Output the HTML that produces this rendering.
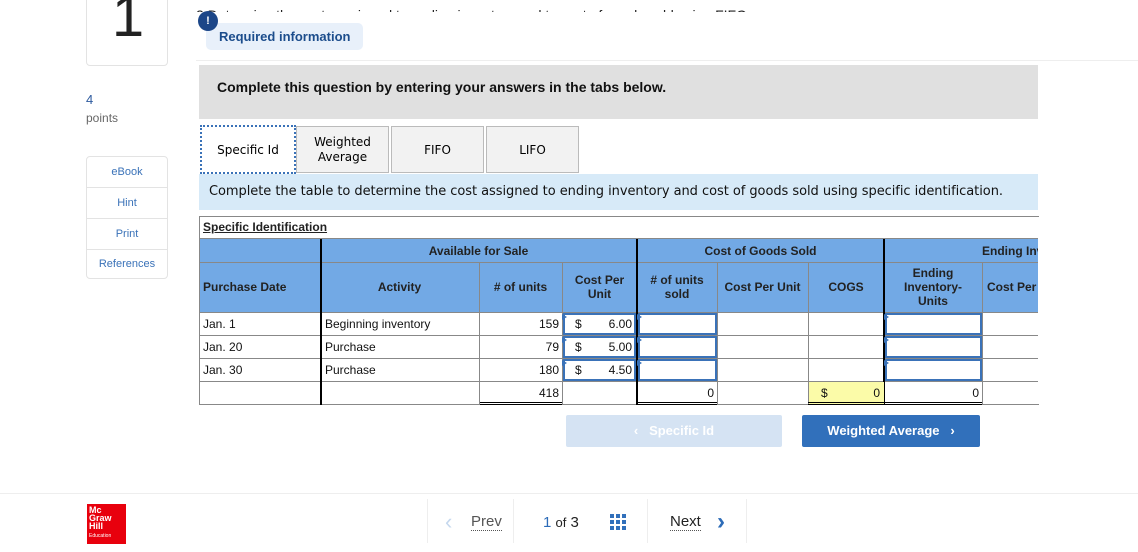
<!DOCTYPE html>
<html><head><meta charset="utf-8"><style>
body{margin:0;width:1138px;height:552px;overflow:hidden;background:#fff;font-family:"Liberation Sans",Arial,sans-serif;position:relative}
.a{position:absolute;box-sizing:border-box}
.h{background:#72a9e5;font-weight:bold;font-size:12px;color:#222;display:flex;align-items:center;justify-content:center;text-align:center;line-height:14px}
.c{font-size:12px;color:#111;display:flex;align-items:center;padding:0 3px}
.r{justify-content:flex-end}
.in{border:2px solid #3a72b8;background:#fff}
.tri{position:absolute;width:0;height:0;border-top:3px solid transparent;border-bottom:3px solid transparent;border-left:5px solid #3a72b8}
.vl{position:absolute;background:#888;width:1px}
.vk{position:absolute;background:#000;width:2px}
.hl{position:absolute;background:#888;height:1px}
.side{font-size:11px;color:#3a72b8;text-align:center;height:30px;line-height:30px;border-bottom:1px solid #e3e3e3}
</style></head><body>
<div class="a" style="left:86px;top:-10px;width:82px;height:76px;border:1px solid #e3e3e3;border-radius:4px;overflow:hidden"><div style="position:absolute;left:0;width:82px;top:-6px;font-size:58px;text-align:center;line-height:64px;color:#222;font-family:'Liberation Sans',sans-serif">1</div></div>
<div class="a" style="left:86px;top:92px;font-size:13px;color:#2d5a9e">4</div>
<div class="a" style="left:86px;top:111px;font-size:12px;color:#666">points</div>
<div class="a" style="left:86px;top:156px;width:82px;border:1px solid #e3e3e3;border-radius:4px">
<div class="side">eBook</div><div class="side">Hint</div><div class="side">Print</div><div class="side" style="border:0;height:28px;line-height:28px">References</div></div>
<div class="a" style="left:196px;top:8px;font-size:14px;color:#222;height:4px;overflow:hidden;line-height:14px;white-space:nowrap"><div style="margin-top:0">2 Determine the costs assigned to ending inventory and to cost of goods sold using FIFO</div></div>
<div class="a" style="left:206px;top:23px;width:157px;height:27px;background:#e8f0fa;border-radius:5px;color:#1c4d8c;font-weight:bold;font-size:13px;line-height:27px;padding-left:13px">Required information</div>
<div class="a" style="left:198px;top:11px;width:20px;height:20px;border-radius:50%;background:#1c4688;color:#fff;font-size:11px;font-weight:bold;text-align:center;line-height:20px">!</div>
<div class="a" style="left:196px;top:60px;width:942px;height:1px;background:#eee"></div>
<div class="a" style="left:199px;top:65px;width:839px;height:54px;background:#e0e0e0;font-weight:bold;font-size:14px;padding:14px 0 0 18px;color:#111">Complete this question by entering your answers in the tabs below.</div>
<div class="a" style="left:200px;top:125px;width:96px;height:49px;border:2px dotted #3a72b8;background:#fff;font-size:12px;display:flex;align-items:center;justify-content:center;font-family:'DejaVu Sans',sans-serif">Specific Id</div>
<div class="a" style="left:296px;top:126px;width:93px;height:47px;border:1px solid #bbb;background:#f2f2f2;font-size:12px;display:flex;align-items:center;justify-content:center;text-align:center;line-height:15px;font-family:'DejaVu Sans',sans-serif">Weighted<br>Average</div>
<div class="a" style="left:391px;top:126px;width:93px;height:47px;border:1px solid #bbb;background:#f2f2f2;font-size:12px;display:flex;align-items:center;justify-content:center;font-family:'DejaVu Sans',sans-serif">FIFO</div>
<div class="a" style="left:486px;top:126px;width:93px;height:47px;border:1px solid #bbb;background:#f2f2f2;font-size:12px;display:flex;align-items:center;justify-content:center;font-family:'DejaVu Sans',sans-serif">LIFO</div>
<div class="a" style="left:199px;top:174px;width:839px;height:36px;background:#d7eaf8;font-size:13px;padding:10px 0 0 10px;color:#111;font-family:'DejaVu Sans',sans-serif;letter-spacing:-0.05px;white-space:nowrap">Complete the table to determine the cost assigned to ending inventory and cost of goods sold using specific identification.</div>
<div class="a" style="left:199px;top:216px;width:840px;height:189px;border-top:1px solid #888;border-left:1px solid #888;border-bottom:1px solid #888"></div>
<div class="a" style="left:203px;top:220px;font-size:12px;font-weight:bold;text-decoration:underline;color:#222">Specific Identification</div>
<div class="a h" style="left:200px;top:239px;width:838px;height:73px"></div>
<div class="a h" style="left:320px;top:239px;width:317px;height:23px">Available for Sale</div>
<div class="a h" style="left:637px;top:239px;width:247px;height:23px">Cost of Goods Sold</div>
<div class="a h" style="left:884px;top:239px;width:154px;height:23px;justify-content:flex-start;overflow:hidden;white-space:nowrap"><span style="margin-left:98px">Ending Inventory</span></div>
<div class="a h" style="left:200px;top:262px;width:120px;height:50px;justify-content:flex-start;padding-left:3px">Purchase Date</div>
<div class="a h" style="left:320px;top:262px;width:159px;height:50px">Activity</div>
<div class="a h" style="left:479px;top:262px;width:83px;height:50px"># of units</div>
<div class="a h" style="left:562px;top:262px;width:75px;height:50px">Cost Per<br>Unit</div>
<div class="a h" style="left:637px;top:262px;width:80px;height:50px"># of units<br>sold</div>
<div class="a h" style="left:717px;top:262px;width:91px;height:50px">Cost Per Unit</div>
<div class="a h" style="left:808px;top:262px;width:76px;height:50px">COGS</div>
<div class="a h" style="left:884px;top:262px;width:98px;height:50px">Ending<br>Inventory-<br>Units</div>
<div class="a h" style="left:982px;top:262px;width:56px;height:50px;justify-content:flex-start;padding-left:5px;white-space:nowrap;overflow:hidden">Cost Per Unit</div>
<div class="hl" style="left:200px;top:238px;width:838px"></div>
<div class="hl" style="left:200px;top:262px;width:838px"></div>
<div class="hl" style="left:200px;top:312px;width:838px"></div>
<div class="hl" style="left:200px;top:335px;width:838px"></div>
<div class="hl" style="left:200px;top:358px;width:838px"></div>
<div class="hl" style="left:200px;top:381px;width:838px"></div>
<div class="vl" style="left:479px;top:262px;height:142px"></div>
<div class="vl" style="left:562px;top:262px;height:142px"></div>
<div class="vl" style="left:717px;top:262px;height:142px"></div>
<div class="vl" style="left:808px;top:262px;height:142px"></div>
<div class="vl" style="left:982px;top:262px;height:142px"></div>
<div class="vk" style="left:320px;top:239px;height:166px"></div>
<div class="vk" style="left:636px;top:239px;height:166px"></div>
<div class="vk" style="left:883px;top:239px;height:166px"></div>
<div class="a c" style="left:200px;top:312px;height:23px">Jan. 1</div>
<div class="a c" style="left:200px;top:335px;height:23px">Jan. 20</div>
<div class="a c" style="left:200px;top:358px;height:23px">Jan. 30</div>
<div class="a c" style="left:322px;top:312px;height:23px">Beginning inventory</div>
<div class="a c" style="left:322px;top:335px;height:23px">Purchase</div>
<div class="a c" style="left:322px;top:358px;height:23px">Purchase</div>
<div class="a c r" style="left:480px;top:312px;width:82px;height:23px">159</div>
<div class="a c r" style="left:480px;top:335px;width:82px;height:23px">79</div>
<div class="a c r" style="left:480px;top:358px;width:82px;height:23px">180</div>
<div class="a c r" style="left:480px;top:381px;width:82px;height:23px">418</div>
<div class="a in c" style="left:563px;top:313px;width:73px;height:22px;justify-content:space-between;padding:0 2px 0 10px"><span>$</span><span>6.00</span></div>
<div class="a in c" style="left:563px;top:336px;width:73px;height:22px;justify-content:space-between;padding:0 2px 0 10px"><span>$</span><span>5.00</span></div>
<div class="a in c" style="left:563px;top:359px;width:73px;height:22px;justify-content:space-between;padding:0 2px 0 10px"><span>$</span><span>4.50</span></div>
<div class="a in" style="left:638px;top:313px;width:79px;height:22px"></div>
<div class="a in" style="left:638px;top:336px;width:79px;height:22px"></div>
<div class="a in" style="left:638px;top:359px;width:79px;height:22px"></div>
<div class="a in" style="left:885px;top:313px;width:97px;height:22px"></div>
<div class="a in" style="left:885px;top:336px;width:97px;height:22px"></div>
<div class="a in" style="left:885px;top:359px;width:97px;height:22px"></div>
<div class="tri" style="left:562px;top:314px"></div><div class="tri" style="left:562px;top:337px"></div><div class="tri" style="left:562px;top:360px"></div>
<div class="tri" style="left:637px;top:314px"></div><div class="tri" style="left:637px;top:337px"></div><div class="tri" style="left:637px;top:360px"></div>
<div class="tri" style="left:884px;top:314px"></div><div class="tri" style="left:884px;top:337px"></div><div class="tri" style="left:884px;top:360px"></div>
<div class="a c r" style="left:637px;top:381px;width:80px;height:23px">0</div>
<div class="a c" style="left:809px;top:382px;width:75px;height:22px;background:#fbfba8;justify-content:space-between;padding:0 4px 0 12px"><span>$</span><span>0</span></div>
<div class="a c r" style="left:884px;top:381px;width:98px;height:23px">0</div>
<div class="a" style="left:480px;top:402px;width:82px;height:3px;border-top:1px solid #000;border-bottom:1px solid #000"></div>
<div class="a" style="left:637px;top:402px;width:80px;height:3px;border-top:1px solid #000;border-bottom:1px solid #000"></div>
<div class="a" style="left:808px;top:402px;width:76px;height:3px;border-top:1px solid #000;border-bottom:1px solid #000"></div>
<div class="a" style="left:884px;top:402px;width:98px;height:3px;border-top:1px solid #000;border-bottom:1px solid #000"></div>
<div class="a" style="left:566px;top:415px;width:216px;height:32px;background:#d5e3f3;border-radius:2px;color:#fff;font-weight:bold;font-size:13px;text-align:center;line-height:32px">&lsaquo;&nbsp;&nbsp;&nbsp;Specific Id</div>
<div class="a" style="left:802px;top:415px;width:178px;height:32px;background:#3170bb;border-radius:2px;color:#fff;font-weight:bold;font-size:13px;text-align:center;line-height:32px">Weighted Average&nbsp;&nbsp;&nbsp;&rsaquo;</div>
<div class="a" style="left:0;top:493px;width:1138px;height:1px;background:#eee"></div>
<div class="a" style="left:87px;top:504px;width:39px;height:40px;background:#e8000d;color:#fff;font-weight:bold;font-size:9px;line-height:8px;padding:2px 0 0 2px">Mc<br>Graw<br>Hill<br><span style="font-size:5px;font-weight:normal">Education</span></div>
<div class="a" style="left:427px;top:499px;width:1px;height:44px;background:#eee"></div>
<div class="a" style="left:513px;top:499px;width:1px;height:44px;background:#eee"></div>
<div class="a" style="left:647px;top:499px;width:1px;height:44px;background:#eee"></div>
<div class="a" style="left:746px;top:499px;width:1px;height:44px;background:#eee"></div>
<div class="a" style="left:445px;top:509px;font-size:22px;color:#c5d8ee">&lsaquo;</div>
<div class="a" style="left:471px;top:514px;font-size:15px;color:#555;border-bottom:1px dotted #555;line-height:16px">Prev</div>
<div class="a" style="left:543px;top:514px;font-size:15px;color:#222"><span style="color:#2d6cb8">1</span> <span style="font-size:13px">of</span> 3</div>
<div class="a" style="left:610px;top:514px;width:16px;height:16px;background:repeating-linear-gradient(90deg,#3170bb 0 4px,#fff 4px 6px),#3170bb"><div style="position:absolute;left:0;top:4px;width:16px;height:2px;background:#fff"></div><div style="position:absolute;left:0;top:10px;width:16px;height:2px;background:#fff"></div></div>
<div class="a" style="left:670px;top:514px;font-size:15px;color:#222;border-bottom:1px dotted #555;line-height:16px">Next</div>
<div class="a" style="left:717px;top:508px;font-size:24px;color:#2d6cb8;font-weight:bold">&rsaquo;</div>
</body></html>
